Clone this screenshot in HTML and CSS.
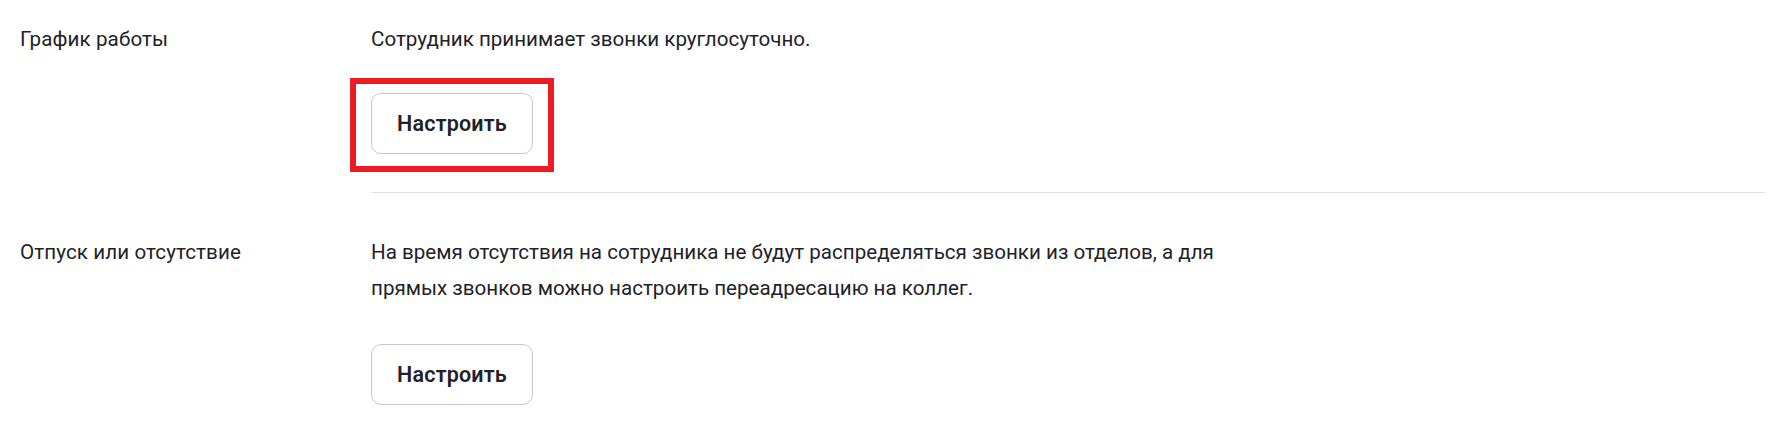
FILE: index.html
```html
<!DOCTYPE html>
<html lang="ru">
<head>
<meta charset="utf-8">
<title>Настройки сотрудника</title>
<link rel="stylesheet" href="styles.css">
</head>
<body>
<div class="page">
  <section class="row row-first">
    <div class="label">График работы</div>
    <div class="body body-divided">
      <p class="text">Сотрудник принимает звонки круглосуточно.</p>
      <div class="btn-wrap">
        <button class="btn" type="button">Настроить</button>
        <span class="highlight"></span>
      </div>
    </div>
  </section>
  <section class="row row-second">
    <div class="label">Отпуск или отсутствие</div>
    <div class="body">
      <p class="text">На время отсутствия на сотрудника не будут распределяться звонки из отделов, а для<br>прямых звонков можно настроить переадресацию на коллег.</p>
      <div class="btn-wrap">
        <button class="btn" type="button">Настроить</button>
      </div>
    </div>
  </section>
</div>
</body>
</html>
```

FILE: styles.css
```css
* { box-sizing: border-box; }
html, body {
  margin: 0;
  padding: 0;
  background: #ffffff;
}
body {
  font-family: Roboto, "Noto Sans", "Liberation Sans", sans-serif;
  color: #1f2229;
  font-size: 20.6px;
  line-height: 36px;
  overflow: hidden;
}
.page {
  padding: 0 9px 0 20px;
}
.row {
  display: grid;
  grid-template-columns: 351px 1fr;
}
.row-first .label,
.row-first .body {
  padding-top: 21px;
}
.row-second .label,
.row-second .body {
  padding-top: 41px;
}
.body-divided {
  padding-bottom: 38px;
  border-bottom: 1px solid #e0e0e6;
}
.label {
  font-size: 20.6px;
  letter-spacing: 0.1px;
}
.text {
  margin: 0;
  font-size: 20.6px;
}
.btn-wrap {
  position: relative;
  display: inline-block;
  margin-top: 36px;
  vertical-align: top;
}
.row-second .btn-wrap {
  margin-top: 38px;
}
.btn {
  display: inline-flex;
  align-items: center;
  justify-content: center;
  height: 61px;
  width: 162px;
  padding: 0;
  border: 1px solid #c6c8ce;
  border-radius: 10px;
  background: #ffffff;
  font-family: Roboto, "Noto Sans", "Liberation Sans", sans-serif;
  font-size: 21.5px;
  font-weight: 600;
  letter-spacing: 0.2px;
  color: #1f2229;
}
.highlight {
  position: absolute;
  left: -21px;
  top: -15px;
  right: -21px;
  bottom: -18px;
  border: 6px solid #ec1c24;
  pointer-events: none;
}
```
